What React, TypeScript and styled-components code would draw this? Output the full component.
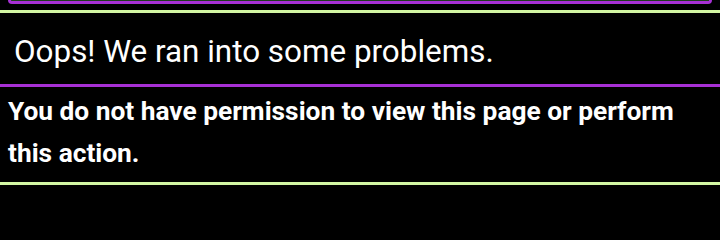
import * as React from "react";
import styled, { createGlobalStyle } from "styled-components";

const GlobalStyle = createGlobalStyle`
  html, body {
    margin: 0;
    padding: 0;
    background: #000000;
  }
  body {
    font-family: Roboto, "Liberation Sans", sans-serif;
    color: #ffffff;
  }
`;

const Page = styled.div`
  display: flex;
  flex-direction: column;
  width: 720px;
  min-height: 202px;
  background: #000000;
`;

const PrevCard = styled.div`
  height: 1px;
  margin: 0 8px;
  background: #1f3d1f;
  border: 3px solid #a730d4;
  border-top: none;
  border-radius: 0 0 8px 8px;
`;

const Panel = styled.section`
  margin-top: 6px;
  border-top: 3px solid #d3f7a3;
  border-bottom: 3px solid #d3f7a3;
`;

const Title = styled.h2`
  margin: 0;
  padding: 20px 14px 14px;
  font-size: 31.4px;
  font-weight: 400;
  line-height: 37px;
  border-bottom: 3px solid #a730d4;
`;

const Message = styled.p`
  margin: 0;
  padding: 3px 8px 8px;
  font-size: 26.3px;
  font-weight: 700;
  line-height: 42px;
`;

export default function App() {
  return (
    <Page>
      <GlobalStyle />
      <PrevCard />
      <Panel>
        <Title>Oops! We ran into some problems.</Title>
        <Message>
          You do not have permission to view this page or perform this action.
        </Message>
      </Panel>
    </Page>
  );
}
